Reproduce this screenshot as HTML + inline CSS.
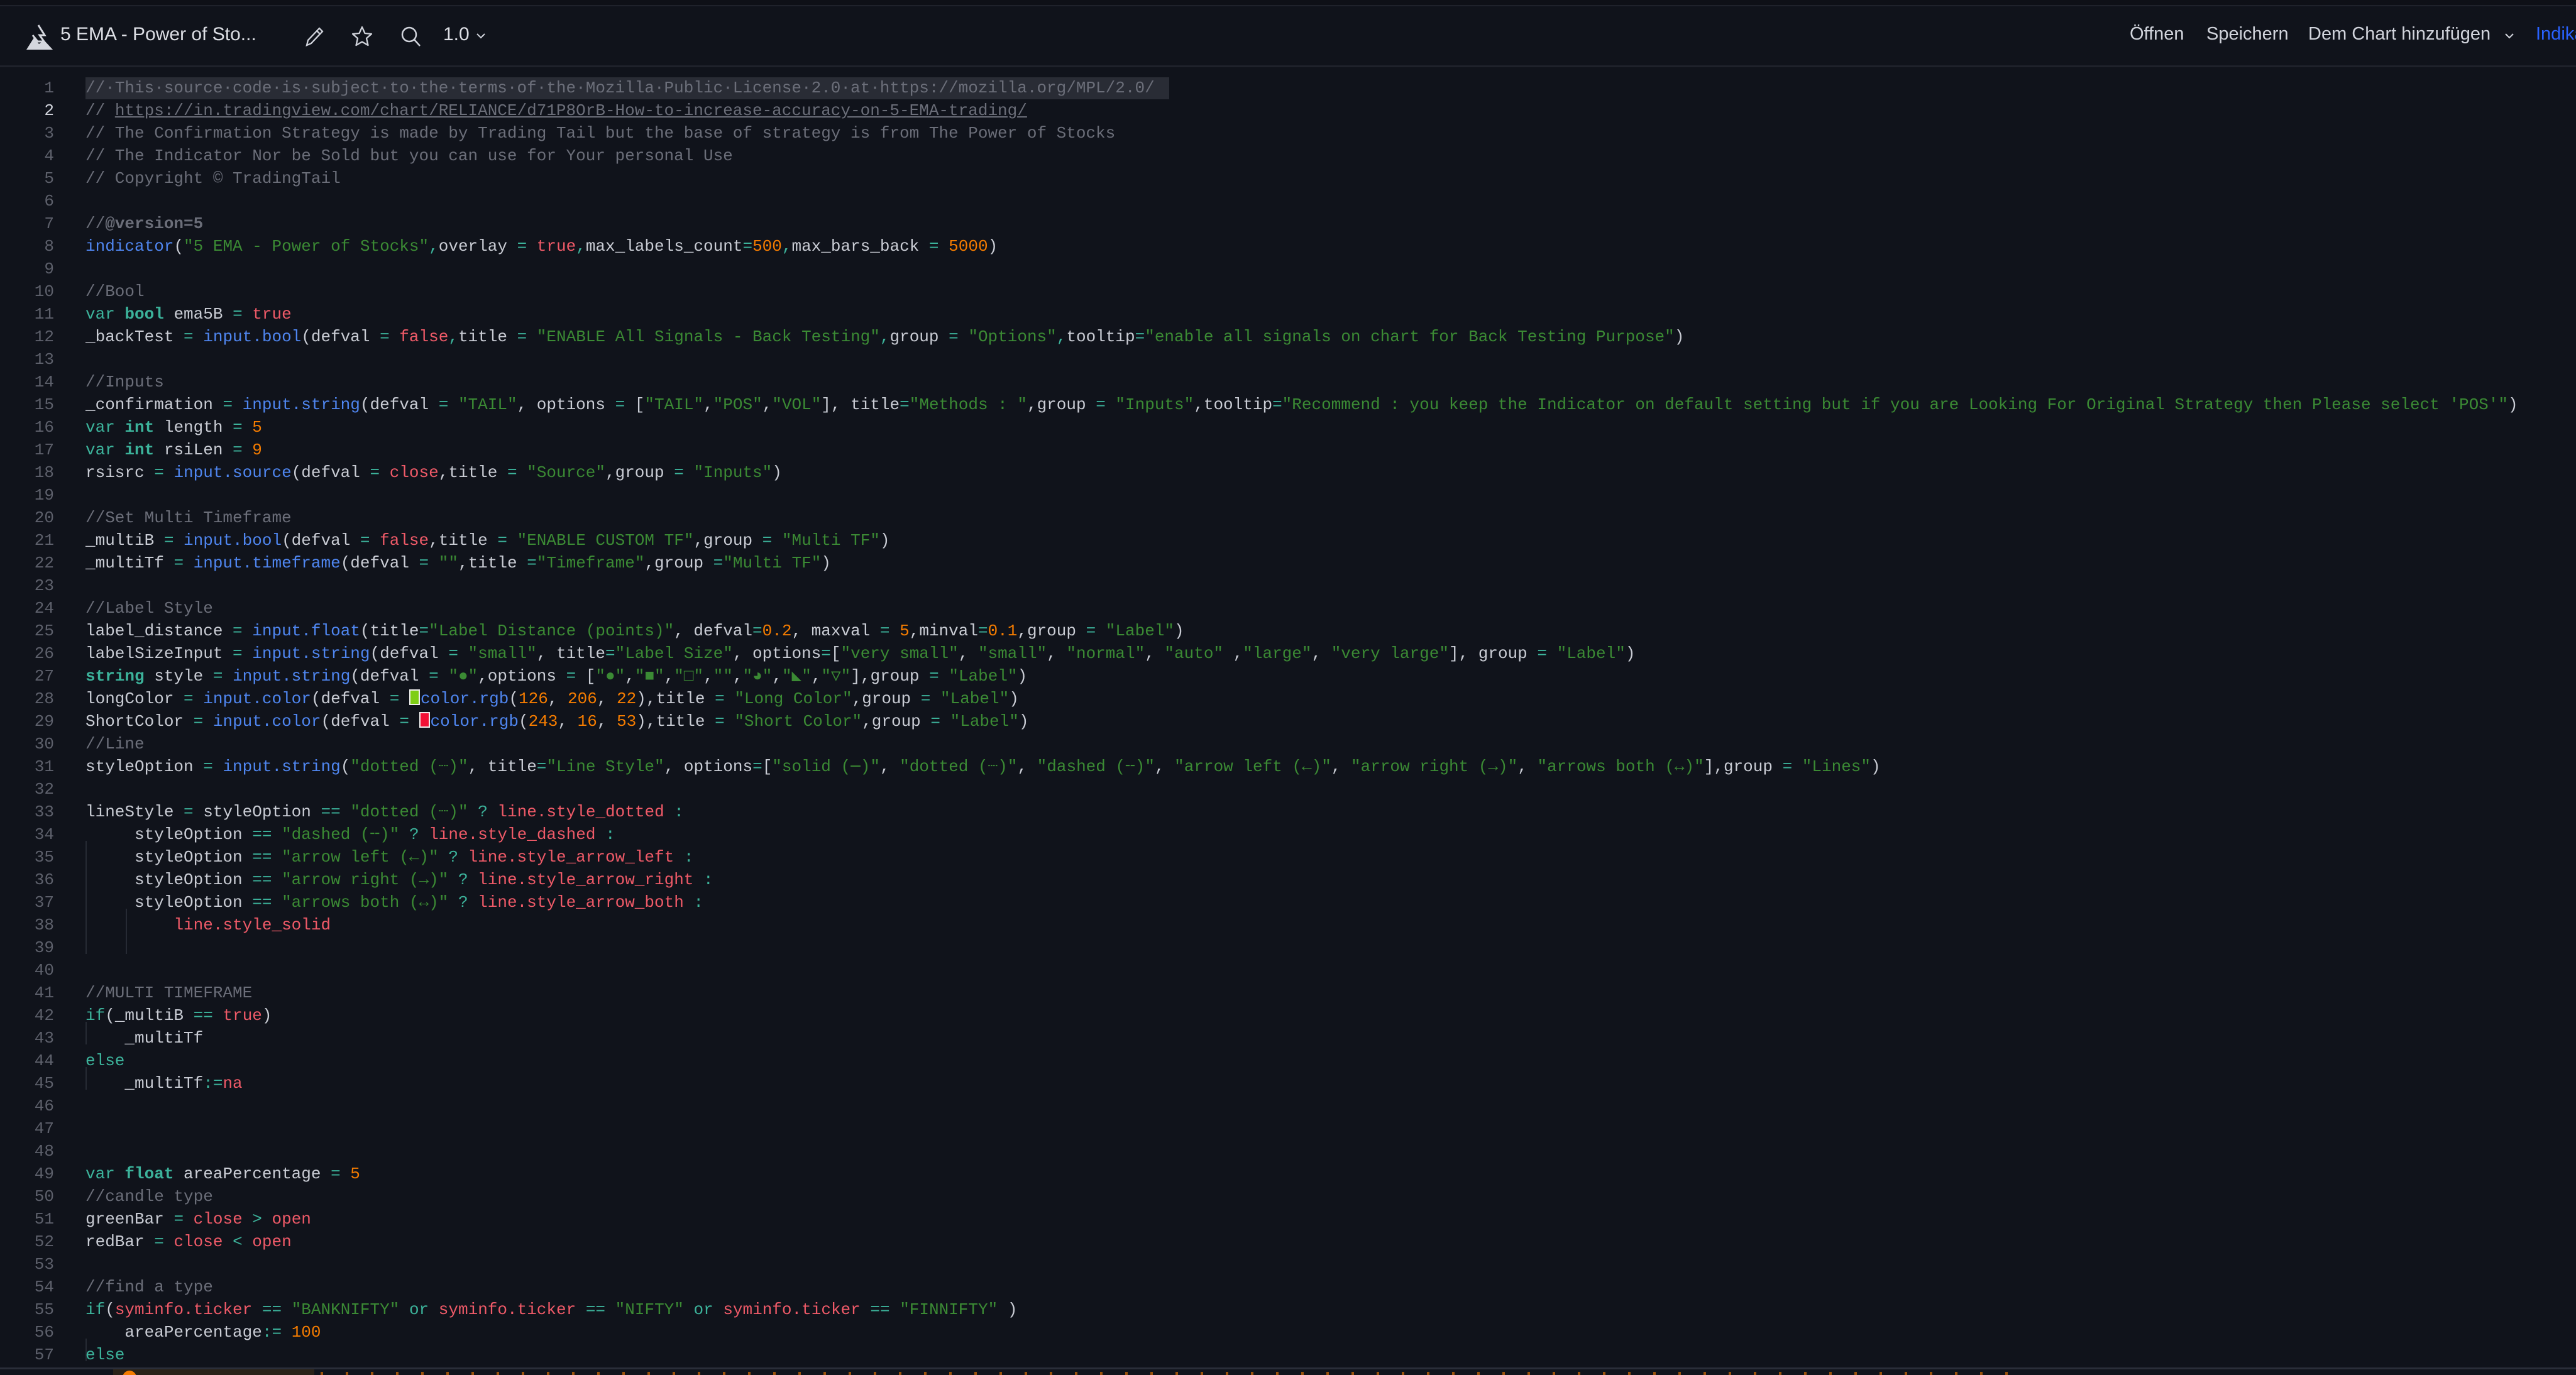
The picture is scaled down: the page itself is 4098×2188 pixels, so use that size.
<!DOCTYPE html>
<html><head><meta charset="utf-8">
<style>
html,body{margin:0;padding:0;background:#10131b;width:4098px;height:2188px;overflow:hidden;position:relative;font-family:"Liberation Sans",sans-serif}
.top{position:absolute;left:0;top:0;width:4098px;height:8px;background:#0e1017;border-bottom:2px solid #1f222b}
.hdr{position:absolute;left:0;top:10px;width:4098px;height:94px;border-bottom:3px solid #1f222b}
.title{position:absolute;left:96px;top:38px;font-size:30px;color:#dcdee4;white-space:nowrap}
.ver{position:absolute;left:705px;top:38px;font-size:30px;color:#dcdee4}
.rt{position:absolute;top:38px;font-size:29px;color:#d1d4dc;white-space:nowrap}
svg{position:absolute}
pre{margin:0;position:absolute;font-family:"Liberation Mono","DejaVu Sans Mono",monospace;font-size:26px;line-height:36px;white-space:pre}
.code{left:136px;top:122px;color:#c9ccd4}
.gut{left:20px;top:122px;width:66px;text-align:right;color:#5d606b}
.c{color:#6b6e79}.k{color:#3cb39b}.b{font-weight:bold}.f{color:#4f86f0}.s{color:#3b8a34}.n{color:#f57c00}.r{color:#ef5a68}.o{color:#3cb39b}
.hl{position:absolute;left:136px;top:123px;width:1724px;height:35px;background:#292c35}
.g{position:absolute;width:2px;background:#262a34}
.sw{display:inline-block;width:13px;height:21px;border:2px solid #eee;vertical-align:-3px;margin-right:1px}
</style></head><body>
<div class="top"></div>
<div class="hdr"></div>
<svg style="left:40px;top:38px" width="46" height="42" viewBox="0 0 46 42"><path d="M21 2 L31 18 L23 18 L30 28 L20 28 L12 18" fill="none" stroke="#d5d7de" stroke-width="3"/><path d="M2 41 L14 22 L22 32 L30 26 L44 41 Z" fill="#d5d7de"/></svg>
<div class="title">5 EMA - Power of Sto...</div>
<svg style="left:482px;top:40px" width="36" height="36" viewBox="0 0 36 36"><path d="M6 32 L8 24 L26 5 L31 10 L13 29 Z M22 9 L27 14" fill="none" stroke="#d1d4dc" stroke-width="2.3"/></svg>
<svg style="left:558px;top:40px" width="36" height="36" viewBox="0 0 36 36"><path d="M18 3 L22.5 13 L33 14 L25 21 L27.5 32 L18 26.5 L8.5 32 L11 21 L3 14 L13.5 13 Z" fill="none" stroke="#d1d4dc" stroke-width="2.3" stroke-linejoin="round"/></svg>
<svg style="left:636px;top:40px" width="36" height="36" viewBox="0 0 36 36"><circle cx="15" cy="15" r="11" fill="none" stroke="#d1d4dc" stroke-width="2.5"/><path d="M23 23 L32 33" stroke="#d1d4dc" stroke-width="2.5"/></svg>
<div class="ver">1.0</div>
<svg style="left:756px;top:50px" width="18" height="14" viewBox="0 0 18 14"><path d="M3 4 L9 10 L15 4" fill="none" stroke="#d1d4dc" stroke-width="2"/></svg>
<div class="rt" style="left:3388px">Öffnen</div>
<div class="rt" style="left:3510px">Speichern</div>
<div class="rt" style="left:3672px">Dem Chart hinzufügen</div>
<svg style="left:3983px;top:50px" width="18" height="14" viewBox="0 0 18 14"><path d="M3 4 L9 10 L15 4" fill="none" stroke="#d1d4dc" stroke-width="2"/></svg>
<div class="rt" style="left:4034px;color:#2962ff">Indikator</div>

<div class="hl"></div>
<div class="g" style="left:136px;top:1338px;height:180px"></div>
<div class="g" style="left:200px;top:1446px;height:72px"></div>
<div class="g" style="left:136px;top:1626px;height:36px"></div>
<div class="g" style="left:136px;top:1698px;height:36px"></div>
<div class="g" style="left:136px;top:2130px;height:36px"></div>

<pre class="gut">1
<span style="color:#d1d4dc">2</span>
3
4
5
6
7
8
9
10
11
12
13
14
15
16
17
18
19
20
21
22
23
24
25
26
27
28
29
30
31
32
33
34
35
36
37
38
39
40
41
42
43
44
45
46
47
48
49
50
51
52
53
54
55
56
57</pre>
<pre class="code"><span class="c">//·This·source·code·is·subject·to·the·terms·of·the·Mozilla·Public·License·2.0·at·https://mozilla.org/MPL/2.0/</span>
<span class="c">// <u>https://in.tradingview.com/chart/RELIANCE/d71P8OrB-How-to-increase-accuracy-on-5-EMA-trading/</u></span>
<span class="c">// The Confirmation Strategy is made by Trading Tail but the base of strategy is from The Power of Stocks</span>
<span class="c">// The Indicator Nor be Sold but you can use for Your personal Use</span>
<span class="c">// Copyright © TradingTail</span>

<span class="c">//<b>@version=5</b></span>
<span class="f">indicator</span>(<span class="s">"5 EMA - Power of Stocks"</span><span class="o">,</span>overlay <span class="o">=</span> <span class="r">true</span><span class="o">,</span>max_labels_count<span class="o">=</span><span class="n">500</span><span class="o">,</span>max_bars_back <span class="o">=</span> <span class="n">5000</span>)

<span class="c">//Bool</span>
<span class="k">var</span> <span class="k b">bool</span> ema5B <span class="o">=</span> <span class="r">true</span>
_backTest <span class="o">=</span> <span class="f">input.bool</span>(defval <span class="o">=</span> <span class="r">false</span><span class="o">,</span>title <span class="o">=</span> <span class="s">"ENABLE All Signals - Back Testing"</span><span class="o">,</span>group <span class="o">=</span> <span class="s">"Options"</span><span class="o">,</span>tooltip<span class="o">=</span><span class="s">"enable all signals on chart for Back Testing Purpose"</span>)

<span class="c">//Inputs</span>
_confirmation <span class="o">=</span> <span class="f">input.string</span>(defval <span class="o">=</span> <span class="s">"TAIL"</span>, options <span class="o">=</span> [<span class="s">"TAIL"</span>,<span class="s">"POS"</span>,<span class="s">"VOL"</span>], title<span class="o">=</span><span class="s">"Methods : "</span>,group <span class="o">=</span> <span class="s">"Inputs"</span>,tooltip<span class="o">=</span><span class="s">"Recommend : you keep the Indicator on default setting but if you are Looking For Original Strategy then Please select 'POS'"</span>)
<span class="k">var</span> <span class="k b">int</span> length <span class="o">=</span> <span class="n">5</span>
<span class="k">var</span> <span class="k b">int</span> rsiLen <span class="o">=</span> <span class="n">9</span>
rsisrc <span class="o">=</span> <span class="f">input.source</span>(defval <span class="o">=</span> <span class="r">close</span>,title <span class="o">=</span> <span class="s">"Source"</span>,group <span class="o">=</span> <span class="s">"Inputs"</span>)

<span class="c">//Set Multi Timeframe</span>
_multiB <span class="o">=</span> <span class="f">input.bool</span>(defval <span class="o">=</span> <span class="r">false</span>,title <span class="o">=</span> <span class="s">"ENABLE CUSTOM TF"</span>,group <span class="o">=</span> <span class="s">"Multi TF"</span>)
_multiTf <span class="o">=</span> <span class="f">input.timeframe</span>(defval <span class="o">=</span> <span class="s">""</span>,title <span class="o">=</span><span class="s">"Timeframe"</span>,group <span class="o">=</span><span class="s">"Multi TF"</span>)

<span class="c">//Label Style</span>
label_distance <span class="o">=</span> <span class="f">input.float</span>(title<span class="o">=</span><span class="s">"Label Distance (points)"</span>, defval<span class="o">=</span><span class="n">0.2</span>, maxval <span class="o">=</span> <span class="n">5</span>,minval<span class="o">=</span><span class="n">0.1</span>,group <span class="o">=</span> <span class="s">"Label"</span>)
labelSizeInput <span class="o">=</span> <span class="f">input.string</span>(defval <span class="o">=</span> <span class="s">"small"</span>, title<span class="o">=</span><span class="s">"Label Size"</span>, options<span class="o">=</span>[<span class="s">"very small"</span>, <span class="s">"small"</span>, <span class="s">"normal"</span>, <span class="s">"auto"</span> ,<span class="s">"large"</span>, <span class="s">"very large"</span>], group <span class="o">=</span> <span class="s">"Label"</span>)
<span class="k b">string</span> style <span class="o">=</span> <span class="f">input.string</span>(defval <span class="o">=</span> <span class="s">"●"</span>,options <span class="o">=</span> [<span class="s">"●"</span>,<span class="s">"■"</span>,<span class="s">"□"</span>,<span class="s">""</span>,<span class="s">"◕"</span>,<span class="s">"◣"</span>,<span class="s">"▽"</span>],group <span class="o">=</span> <span class="s">"Label"</span>)
longColor <span class="o">=</span> <span class="f">input.color</span>(defval <span class="o">=</span> <span class="sw" style="background:#7ece16"></span><span class="f">color.rgb</span>(<span class="n">126</span>, <span class="n">206</span>, <span class="n">22</span>),title <span class="o">=</span> <span class="s">"Long Color"</span>,group <span class="o">=</span> <span class="s">"Label"</span>)
ShortColor <span class="o">=</span> <span class="f">input.color</span>(defval <span class="o">=</span> <span class="sw" style="background:#f31035"></span><span class="f">color.rgb</span>(<span class="n">243</span>, <span class="n">16</span>, <span class="n">53</span>),title <span class="o">=</span> <span class="s">"Short Color"</span>,group <span class="o">=</span> <span class="s">"Label"</span>)
<span class="c">//Line</span>
styleOption <span class="o">=</span> <span class="f">input.string</span>(<span class="s">"dotted (┈)"</span>, title<span class="o">=</span><span class="s">"Line Style"</span>, options<span class="o">=</span>[<span class="s">"solid (─)"</span>, <span class="s">"dotted (┈)"</span>, <span class="s">"dashed (╌)"</span>, <span class="s">"arrow left (←)"</span>, <span class="s">"arrow right (→)"</span>, <span class="s">"arrows both (↔)"</span>],group <span class="o">=</span> <span class="s">"Lines"</span>)

lineStyle <span class="o">=</span> styleOption <span class="o">==</span> <span class="s">"dotted (┈)"</span> <span class="o">?</span> <span class="r">line.style_dotted</span> <span class="o">:</span>
     styleOption <span class="o">==</span> <span class="s">"dashed (╌)"</span> <span class="o">?</span> <span class="r">line.style_dashed</span> <span class="o">:</span>
     styleOption <span class="o">==</span> <span class="s">"arrow left (←)"</span> <span class="o">?</span> <span class="r">line.style_arrow_left</span> <span class="o">:</span>
     styleOption <span class="o">==</span> <span class="s">"arrow right (→)"</span> <span class="o">?</span> <span class="r">line.style_arrow_right</span> <span class="o">:</span>
     styleOption <span class="o">==</span> <span class="s">"arrows both (↔)"</span> <span class="o">?</span> <span class="r">line.style_arrow_both</span> <span class="o">:</span>
         <span class="r">line.style_solid</span>


<span class="c">//MULTI TIMEFRAME</span>
<span class="k">if</span>(_multiB <span class="o">==</span> <span class="r">true</span>)
    _multiTf
<span class="k">else</span>
    _multiTf<span class="o">:=</span><span class="r">na</span>



<span class="k">var</span> <span class="k b">float</span> areaPercentage <span class="o">=</span> <span class="n">5</span>
<span class="c">//candle type</span>
greenBar <span class="o">=</span> <span class="r">close</span> <span class="o">&gt;</span> <span class="r">open</span>
redBar <span class="o">=</span> <span class="r">close</span> <span class="o">&lt;</span> <span class="r">open</span>

<span class="c">//find a type</span>
<span class="k">if</span>(<span class="r">syminfo.ticker</span> <span class="o">==</span> <span class="s">"BANKNIFTY"</span> <span class="k">or</span> <span class="r">syminfo.ticker</span> <span class="o">==</span> <span class="s">"NIFTY"</span> <span class="k">or</span> <span class="r">syminfo.ticker</span> <span class="o">==</span> <span class="s">"FINNIFTY"</span> )
    areaPercentage<span class="o">:=</span> <span class="n">100</span>
<span class="k">else</span></pre>
<div style="position:absolute;left:0;top:2176px;width:4098px;height:3px;background:#2a2e39"></div>
<div style="position:absolute;left:180px;top:2179px;width:320px;height:9px;background:#2a2218"></div>
<div style="position:absolute;left:195px;top:2181px;width:22px;height:22px;border-radius:50%;background:#f57c00"></div>
<div style="position:absolute;left:510px;top:2183px;width:2700px;height:5px;background:repeating-linear-gradient(90deg,#f57c00 0 4px,transparent 4px 40px);opacity:.6"></div>
</body></html>
